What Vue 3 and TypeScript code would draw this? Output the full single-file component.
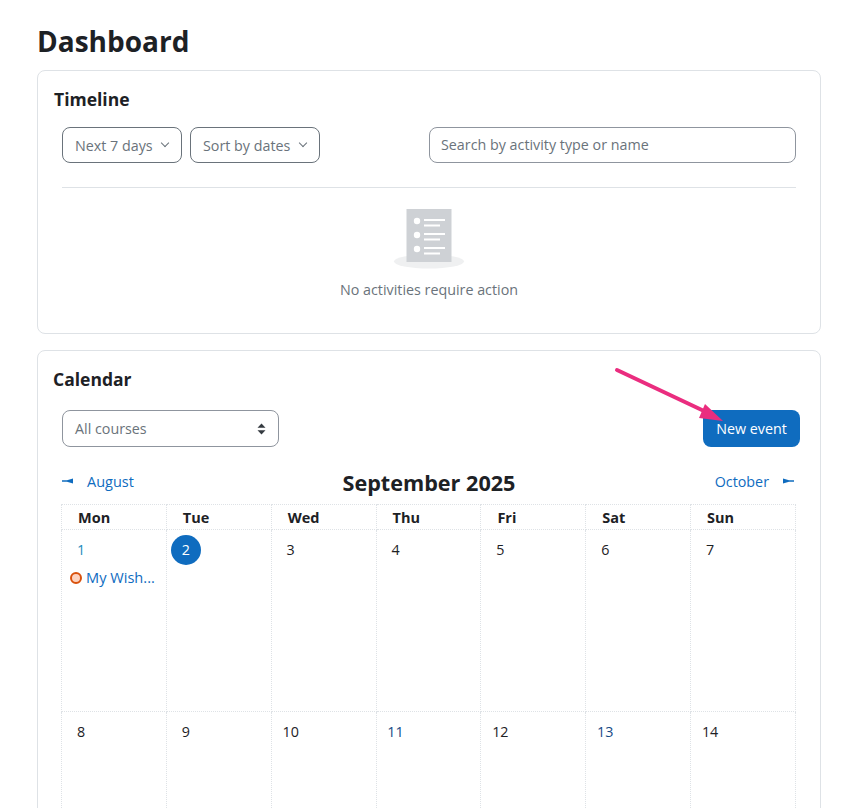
<template>
  <div class="page">
    <h1 class="page-title">Dashboard</h1>

    <section class="card timeline">
      <h5 class="card-title">Timeline</h5>
      <div class="filters">
        <button class="filter-btn next">Next 7 days <span class="chev"></span></button>
        <button class="filter-btn sort">Sort by dates <span class="chev"></span></button>
        <div class="search">Search by activity type or name</div>
      </div>
      <div class="empty">
        <svg class="empty-icon" width="72" height="62" viewBox="0 0 72 62">
          <ellipse cx="36" cy="52.5" rx="35" ry="7" fill="#eff0f1" />
          <rect x="13.5" y="0" width="45" height="53" fill="#ced1d5" />
          <g fill="#fff">
            <circle cx="24" cy="12" r="3.2" />
            <circle cx="24" cy="26" r="3.2" />
            <circle cx="24" cy="40" r="3.2" />
            <rect x="31" y="10" width="21" height="2" />
            <rect x="31" y="15.500" width="16" height="2" />
            <rect x="31" y="24" width="21" height="2" />
            <rect x="31" y="29.500" width="16" height="2" />
            <rect x="31" y="38" width="21" height="2" />
            <rect x="31" y="43.500" width="16" height="2" />
          </g>
        </svg>
        <p class="empty-text">No activities require action</p>
      </div>
    </section>

    <section class="card calendar">
      <h5 class="card-title cal-title">Calendar</h5>
      <div class="cal-controls">
        <div class="course-select">
          All courses
          <svg width="9" height="12" viewBox="0 0 9 12"><path d="M4.500 0.500 8.500 4.800H.5zM4.500 11.500.5 7.200h8z" fill="#343a40" /></svg>
        </div>
        <button class="new-event">New event</button>
      </div>
      <div class="month-nav">
        <a class="nav-link">
          <svg width="12" height="6" viewBox="0 0 12 6"><path d="M0 2.300H5L11 .5V5.500L5 3.700H0z" fill="#0f6cbf" /></svg>
          August
        </a>
        <h4 class="month">September 2025</h4>
        <a class="nav-link next-month">
          October
          <svg width="12" height="6" viewBox="0 0 12 6"><path d="M12 2.300H7L1 .5V5.500L7 3.700H12z" fill="#0f6cbf" /></svg>
        </a>
      </div>
      <table class="month-table">
        <thead>
          <tr>
            <th v-for="d in days" :key="d">{{ d }}</th>
          </tr>
        </thead>
        <tbody>
          <tr v-for="(week, i) in weeks" :key="i">
            <td v-for="c in week" :key="c.n">
              <span v-if="c.today" class="today">{{ c.n }}</span>
              <span v-else class="day" :class="{ linked: c.link, dark: c.dark }">{{ c.n }}</span>
              <div v-if="c.event" class="event">
                <span class="dot"></span>
                <span class="event-name">{{ c.event }}</span>
              </div>
            </td>
          </tr>
        </tbody>
      </table>
    </section>

    <svg class="arrow" width="112" height="58" viewBox="0 0 112 58">
      <line x1="3" y1="3" x2="90" y2="44" stroke="#ea2d7f" stroke-width="4" stroke-linecap="round" />
      <path d="M91 37 85 51 109 54z" fill="#ea2d7f" />
    </svg>
  </div>
</template>

<script setup lang="ts">
interface Cell {
  n: number
  today?: boolean
  link?: boolean
  dark?: boolean
  event?: string
}

const days = ['Mon', 'Tue', 'Wed', 'Thu', 'Fri', 'Sat', 'Sun']

const weeks: Cell[][] = [
  [
    { n: 1, link: true, event: 'My Wish...' },
    { n: 2, today: true },
    { n: 3 },
    { n: 4 },
    { n: 5 },
    { n: 6 },
    { n: 7 },
  ],
  [
    { n: 8 },
    { n: 9 },
    { n: 10 },
    { n: 11, dark: true },
    { n: 12 },
    { n: 13, dark: true },
    { n: 14 },
  ],
]
</script>

<style>
html,
body {
  margin: 0;
  background: #fff;
  overflow: hidden;
}
</style>

<style scoped>
.page {
  position: relative;
  height: 808px;
  overflow: hidden;
  padding: 0 29px 0 37px;
  font-family: "Open Sans", "Noto Sans", sans-serif;
  font-size: 14.3px;
  color: #1d2125;
  box-sizing: border-box;
}

.page-title {
  margin: 0;
  padding-top: 22px;
  box-sizing: border-box;
  font-size: 28px;
  line-height: 38px;
  font-weight: 700;
  height: 70px;
}

.card {
  border: 1px solid #dee2e6;
  border-radius: 8px;
  background: #fff;
}

.timeline {
  height: 264px;
  padding: 16px 24px 0 16px;
  box-sizing: border-box;
  margin-bottom: 16px;
}

.card-title {
  margin: 0;
  font-size: 17.5px;
  line-height: 24px;
  font-weight: 700;
}

.filters {
  display: flex;
  align-items: center;
  margin: 16px 0 0 8px;
  padding-bottom: 24px;
  border-bottom: 1px solid #dee2e6;
}

.filter-btn {
  height: 36px;
  padding: 0 12px;
  margin-right: 8px;
  border: 1px solid #6a737b;
  border-radius: 8px;
  background: #fff;
  color: #6a737b;
  font: inherit;
  display: flex;
  align-items: center;
  justify-content: space-between;
  box-sizing: border-box;
}

.filter-btn.next {
  width: 120px;
}

.filter-btn.sort {
  width: 130px;
}

.chev {
  width: 5px;
  height: 5px;
  border-right: 1px solid #6a737b;
  border-bottom: 1px solid #6a737b;
  transform: translateY(-2px) rotate(45deg);
  margin: 0 1px;
}

.search {
  width: 367px;
  height: 36px;
  margin-left: auto;
  padding: 0 11px;
  box-sizing: border-box;
  border: 1px solid #8f959e;
  border-radius: 8px;
  color: #6a737b;
  line-height: 34px;
}

.empty {
  display: flex;
  flex-direction: column;
  align-items: center;
  padding: 21px 0 0 8px;
}

.empty-icon {
  display: block;
}

.empty-text {
  margin: 8px 0 0;
  color: #6a737b;
  line-height: 21px;
}

.calendar {
  padding: 16px 24px 0 16px;
  height: 520px;
  box-sizing: border-box;
}

.cal-title {
  margin: 0 0 19px -1px;
}

.cal-controls {
  display: flex;
  align-items: center;
  justify-content: space-between;
  margin-left: 8px;
  margin-right: -4px;
}

.course-select {
  width: 217px;
  height: 37px;
  box-sizing: border-box;
  padding: 0 12px;
  border: 1px solid #8f959e;
  border-radius: 8px;
  color: #6a737b;
  display: flex;
  align-items: center;
  justify-content: space-between;
}

.new-event {
  width: 97px;
  height: 37px;
  border: none;
  border-radius: 8px;
  background: #0f6cbf;
  color: #fff;
  font: inherit;
}

.month-nav {
  display: grid;
  grid-template-columns: 1fr auto 1fr;
  align-items: center;
  margin: 21px 0 7px 8px;
  height: 29px;
}

.nav-link {
  color: #0f6cbf;
  display: flex;
  align-items: center;
  gap: 13px;
  line-height: 21px;
  margin-top: -3px;
  font-size: 14.5px;
}

.next-month {
  justify-content: flex-end;
  font-size: 14.3px;
  margin-right: 2px;
}

.month {
  margin: 0;
  font-size: 21.6px;
  line-height: 29px;
  font-weight: 700;
}

.month-table {
  width: 735px;
  margin-left: 7px;
  border-collapse: collapse;
  table-layout: fixed;
}

.month-table th,
.month-table td {
  border: 1px dotted #dee2e6;
  padding: 0;
  text-align: left;
  vertical-align: top;
}

.month-table th {
  height: 24px;
  box-sizing: border-box;
  padding: 2px 0 0 16px;
  font-size: 14.5px;
  font-weight: 700;
  line-height: 22px;
}

.month-table td {
  height: 182px;
  padding: 5px 4px;
  box-sizing: border-box;
}

.day {
  display: block;
  width: 30px;
  height: 30px;
  line-height: 30px;
  text-align: center;
}

.day.linked {
  color: #1a8bc0;
}

.day.dark {
  color: #174a86;
}

.today {
  display: block;
  width: 30px;
  height: 30px;
  line-height: 30px;
  text-align: center;
  border-radius: 50%;
  background: #0f6cbf;
  color: #fff;
}

.event {
  display: flex;
  align-items: center;
  gap: 4px;
  margin: 2px 0 0 4px;
  color: #0f6cbf;
  line-height: 21px;
  font-size: 14.6px;
  white-space: nowrap;
}

.dot {
  width: 12px;
  height: 12px;
  box-sizing: border-box;
  border: 2px solid #d9510c;
  border-radius: 50%;
  background: #fdd3c0;
  flex: none;
}

.arrow {
  position: absolute;
  left: 614px;
  top: 367px;
}
</style>
